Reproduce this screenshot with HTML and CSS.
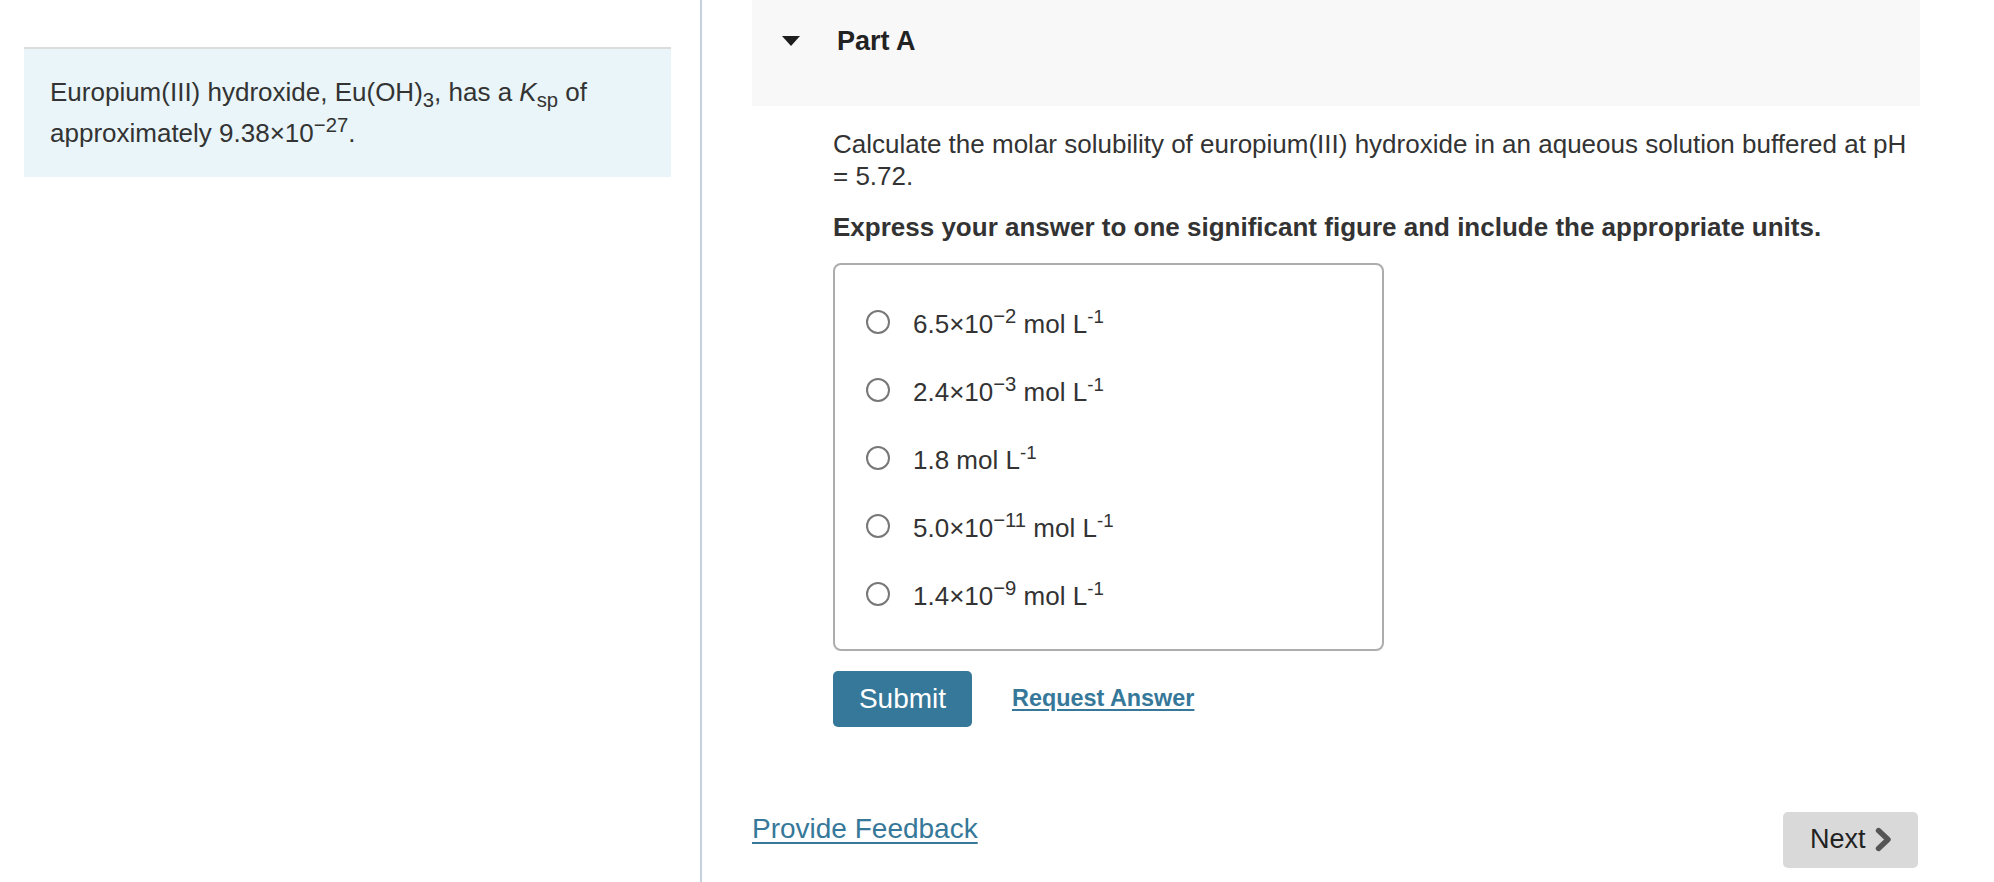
FILE: index.html
```html
<!DOCTYPE html>
<html lang="en">
<head>
<meta charset="utf-8">
<title>Part A</title>
<link rel="stylesheet" href="styles.css">
</head>
<body>
<div class="page">
  <aside class="intro">
    <div class="intro-box">
      <p>Europium(III) hydroxide, Eu(OH)<sub>3</sub>, has a <i>K</i><sub>sp</sub> of approximately 9.38×10<sup>−27</sup>.</p>
    </div>
  </aside>
  <main class="part">
    <div class="part-head">
      <span class="caret"></span>
      <h2 class="part-title">Part A</h2>
    </div>
    <div class="part-body">
      <p class="question">Calculate the molar solubility of europium(III) hydroxide in an aqueous solution buffered at pH = 5.72.</p>
      <p class="instruction">Express your answer to one significant figure and include the appropriate units.</p>
      <div class="choices">
        <label class="choice"><span class="radio"></span><span class="choice-text">6.5×10<sup>−2</sup> mol L<sup class="unit">-1</sup></span></label>
        <label class="choice"><span class="radio"></span><span class="choice-text">2.4×10<sup>−3</sup> mol L<sup class="unit">-1</sup></span></label>
        <label class="choice"><span class="radio"></span><span class="choice-text">1.8 mol L<sup class="unit">-1</sup></span></label>
        <label class="choice"><span class="radio"></span><span class="choice-text">5.0×10<sup>−11</sup> mol L<sup class="unit">-1</sup></span></label>
        <label class="choice"><span class="radio"></span><span class="choice-text">1.4×10<sup>−9</sup> mol L<sup class="unit">-1</sup></span></label>
      </div>
      <div class="actions">
        <button class="submit" type="button">Submit</button>
        <a class="request" href="#">Request Answer</a>
      </div>
    </div>
    <div class="footer">
      <a class="feedback" href="#">Provide Feedback</a>
      <button class="next" type="button">Next<svg class="chev" viewBox="0 0 17 25" width="17" height="25" aria-hidden="true"><path d="M3.5 3.5 L13 12.5 L3.5 21.5" fill="none" stroke="#555" stroke-width="5.4" stroke-linejoin="round" stroke-linecap="round"/></svg></button>
    </div>
  </main>
</div>
</body>
</html>
```

FILE: styles.css
```css
* { box-sizing: border-box; }

html, body {
  margin: 0;
  padding: 0;
  background: #fff;
}

body {
  font-family: "Liberation Sans", Arial, Helvetica, sans-serif;
  color: #333;
  font-size: 26px;
}

.page {
  display: flex;
  height: 882px;
}

.intro {
  width: 702px;
  flex: none;
  padding: 47px 29px 0 24px;
  border-right: 2px solid #c3d0dd;
}

.intro-box {
  background: #e9f5f8;
  border-top: 2px solid #dcdcdc;
  padding: 23px 20px 23px 26px;
}

.intro-box p {
  margin: 0;
  line-height: 41px;
}

sup, sub {
  font-size: 0.78em;
  line-height: 0;
}

sup.unit {
  font-size: 0.72em;
}

.part {
  flex: 1;
  display: flex;
  flex-direction: column;
  padding: 0 74px 0 50px;
}

.part-head {
  height: 106px;
  background: #f8f8f8;
  display: flex;
  align-items: center;
  align-self: stretch;
  padding: 0 0 25px 30px;
}

.caret {
  width: 0;
  height: 0;
  border-left: 9px solid transparent;
  border-right: 9px solid transparent;
  border-top: 10px solid #1e1e1e;
  margin-right: 37px;
}

.part-title {
  margin: 0;
  font-size: 27px;
  line-height: 32px;
  font-weight: bold;
  color: #222;
}

.part-body {
  padding-left: 81px;
}

.question {
  margin: 23px 0 0;
  line-height: 31.5px;
}

.instruction {
  margin: 20px 0 0;
  line-height: 31.5px;
  font-weight: bold;
}

.choices {
  margin-top: 19px;
  width: 551px;
  border: 2px solid #adadad;
  border-radius: 8px;
  padding: 23px 0 21px 31px;
  display: flex;
  flex-direction: column;
}

.choice {
  height: 68px;
  display: flex;
  align-items: center;
  gap: 23px;
}

.radio {
  width: 24px;
  height: 24px;
  border: 2px solid #777;
  border-radius: 50%;
  flex: none;
}

.choice-text {
  line-height: 30px;
  padding-top: 4px;
}

.actions {
  margin-top: 20px;
  display: flex;
  align-items: center;
  gap: 40px;
}

.submit {
  width: 139px;
  height: 56px;
  border: none;
  border-radius: 5px;
  background: #367899;
  color: #fff;
  font-family: inherit;
  font-size: 28px;
  padding: 0;
}

.request {
  color: #367899;
  font-weight: bold;
  font-size: 23.4px;
  text-decoration: underline;
  text-underline-offset: 3px;
}

.footer {
  margin-top: 85px;
  display: flex;
  justify-content: space-between;
  align-items: flex-start;
  padding-right: 2px;
}

.feedback {
  color: #367899;
  font-size: 28px;
  line-height: 34px;
  text-decoration: underline;
  text-underline-offset: 4px;
}

.next {
  width: 135px;
  height: 56px;
  border: none;
  border-radius: 5px;
  background: #d9d9d9;
  color: #222;
  font-family: inherit;
  font-size: 27px;
  display: flex;
  align-items: center;
  padding: 0 0 0 27px;
  gap: 9px;
}

.chev {
  display: block;
}
```
